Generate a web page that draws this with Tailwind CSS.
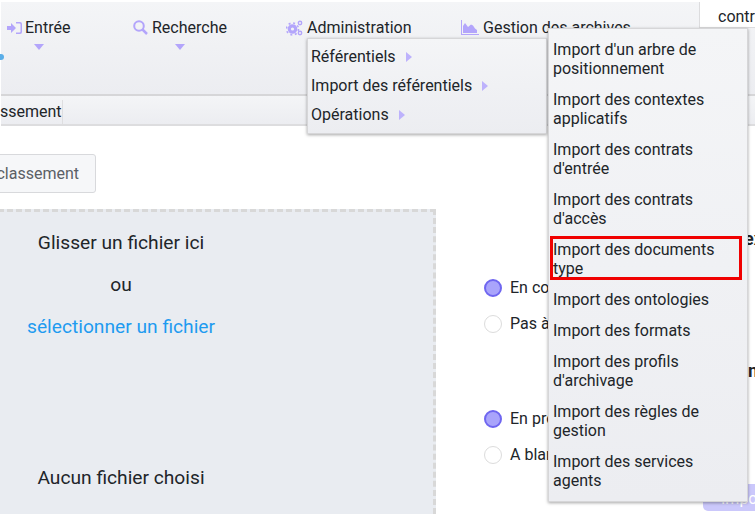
<!DOCTYPE html>
<html class="overflow-hidden">
<head>
<meta charset="UTF-8">
<title>Import</title>
<script src="https://cdn.jsdelivr.net/npm/@tailwindcss/browser@4"></script>
</head>
<body class="w-[755px] h-[514px] overflow-hidden bg-white text-[#212529] font-['Roboto',sans-serif] text-[16px] relative">
    <!-- top navigation -->
    <nav class="relative h-[94px] mt-[2px] ml-px bg-gradient-to-b from-[#f4f5f7] to-[#ecedf1] border-b-2 border-[#d6d6d8] flex items-start">
        <div class="absolute left-[-3px] top-[52px] size-[6px] rounded-full bg-[#5aaee8]"></div>
        <div class="w-[132px] pl-[6px] pt-[16px] relative">
            <div class="flex items-center gap-[3px] leading-[19px]">
                <svg width="15" height="14" viewBox="0 0 15 14" fill="#b3a5fb"><path d="M0 5h4V2l5 5-5 5V9H0z"/><path d="M9 1h4a2 2 0 0 1 2 2v8a2 2 0 0 1-2 2H9v-1.500h3.500a1 1 0 0 0 1-1v-7a1 1 0 0 0-1-1H9z"/></svg>
                <span>Entrée</span>
            </div>
            <div class="absolute left-[33px] top-[42px] w-0 h-0 border-x-[5px] border-x-transparent border-t-[6px] border-t-[#b3a5fb]"></div>
        </div>
        <div class="w-[153px] pt-[16px] relative">
            <div class="flex items-center gap-[4px] leading-[19px]">
                <svg width="15" height="15" viewBox="0 0 15 15" fill="none" stroke="#b3a5fb" stroke-width="2"><circle cx="6" cy="6" r="4.800"/><path d="M9.500 9.500l4.500 4.500" stroke-width="2.500"/></svg>
                <span>Recherche</span>
            </div>
            <div class="absolute left-[42px] top-[42px] w-0 h-0 border-x-[5px] border-x-transparent border-t-[6px] border-t-[#b3a5fb]"></div>
        </div>
        <div class="w-[175px] pt-[16px]">
            <div class="flex items-center gap-[4px] leading-[19px]">
                <svg width="17" height="16" viewBox="0 0 17 16" fill="#b3a5fb"><circle cx="6.500" cy="9" r="3.200" fill="none" stroke="#b3a5fb" stroke-width="3.200"/><circle cx="6.500" cy="9" r="6" fill="none" stroke="#b3a5fb" stroke-width="1.600" stroke-dasharray="2 2.700"/><circle cx="14" cy="3" r="1.700" fill="none" stroke="#b3a5fb" stroke-width="1.400"/><circle cx="14" cy="13" r="1.700" fill="none" stroke="#b3a5fb" stroke-width="1.400"/></svg>
                <span>Administration</span>
            </div>
        </div>
        <div class="pt-[16px]">
            <div class="flex items-center gap-[4px] leading-[19px]">
                <svg width="18" height="15" viewBox="0 0 18 15" fill="#b3a5fb"><path d="M0 0h1v14h17v1H0z"/><path d="M2 13V6l2-3 3 4 3-2.500 2 1 2 3 2 1.500v3z"/></svg>
                <span>Gestion des archives</span>
            </div>
        </div>
        <!-- tab on the right -->
        <div class="absolute left-[698px] top-0 w-[56px] h-[26px] bg-white border-l border-[#dcdcde] border-b pl-[18px] pt-[5px] leading-[19px] overflow-hidden">contr</div>
    </nav>

    <!-- sub bar -->
    <div class="h-[30px] bg-gradient-to-b from-[#f4f5f7] to-[#ecedf1] border-b-2 border-[#dddddf] flex items-center ml-px">
        <span class="mt-[3px] border-r border-[#dedee0] leading-[24px] -ml-[24px]">Classement</span>
    </div>

    <!-- page content -->
    <div class="flex items-start">
        <div class="w-[436px] shrink-0">
            <div class="-ml-[10px] mt-[28px] w-[106px] h-[39px] overflow-hidden bg-[#f6f7f9] border border-[#d8d9dc] rounded-[3px] text-[#5b6066] leading-[37px] pr-[16px] whitespace-nowrap flex justify-end">classement</div>
            <div class="mt-[16px] -ml-[20px] w-[456px] h-[305px] bg-[#e9ecf1] border-[3px] border-b-0 border-dashed border-[#d8d8d8] text-[19.2px] leading-[22px]">
                <div class="w-[278px] flex flex-col items-center ml-[-1px] pt-[20px]">
                    <p>Glisser un fichier ici</p>
                    <p class="mt-[20px]">ou</p>
                    <p class="mt-[20px] text-[#1e9bf0]">sélectionner un fichier</p>
                    <p class="mt-[129px]">Aucun fichier choisi</p>
                </div>
            </div>
        </div>
        <div class="ml-[48px] pt-[152px] text-[16px] leading-[19px] whitespace-nowrap">
            <div class="flex items-center gap-[8px] h-[19px]">
                <span class="size-[18px] rounded-full bg-[#a9a4fb] border-2 border-[#6f66f0]"></span>En cours
            </div>
            <div class="flex items-center gap-[8px] h-[19px] mt-[17px]">
                <span class="size-[18px] rounded-full bg-white border border-[#dcdcdc]"></span>Pas à pas
            </div>
            <div class="flex items-center gap-[8px] h-[19px] mt-[76px]">
                <span class="size-[18px] rounded-full bg-[#a9a4fb] border-2 border-[#6f66f0]"></span>En production
            </div>
            <div class="flex items-center gap-[8px] h-[19px] mt-[17px]">
                <span class="size-[18px] rounded-full bg-white border border-[#dcdcdc]"></span>A blanc
            </div>
        </div>
    </div>

    <!-- fragments of the right column, behind the menu -->
    <div class="absolute left-[640px] top-[228px] w-[123px] text-right font-bold text-[18px] leading-[22px] whitespace-nowrap">Contex</div>
    <div class="absolute left-[640px] top-[360px] w-[118px] text-right font-bold text-[18px] leading-[22px] whitespace-nowrap">Exécution</div>
    <div class="absolute left-[703px] top-[484px] w-[60px] h-[27px] rounded-[5px] bg-[#cbc8fb] text-white pl-[18px] pt-[5px] leading-[19px] overflow-hidden">Import</div>

    <!-- administration dropdown -->
    <div class="absolute left-[307px] top-[38px] w-[240px] h-[96px] z-10 bg-gradient-to-b from-[#f4f5f7] to-[#ecedf1] border border-[#d6d6d8] shadow-[0_1px_3px_rgba(0,0,0,0.35)] pl-[3px] pt-[8px] leading-[19px] text-[#212529]">
        <div class="flex items-center gap-[10px] h-[19px]">Référentiels <span class="w-0 h-0 border-y-[5px] border-y-transparent border-l-[6px] border-l-[#bdb2fc]"></span></div>
        <div class="flex items-center gap-[10px] h-[19px] mt-[10px]">Import des référentiels <span class="w-0 h-0 border-y-[5px] border-y-transparent border-l-[6px] border-l-[#bdb2fc]"></span></div>
        <div class="flex items-center gap-[10px] h-[19px] mt-[10px]">Opérations <span class="w-0 h-0 border-y-[5px] border-y-transparent border-l-[6px] border-l-[#bdb2fc]"></span></div>
    </div>

    <!-- import submenu -->
    <ul class="absolute left-[548px] top-[28px] w-[200px] h-[474px] z-20 bg-gradient-to-b from-[#f4f5f7] to-[#ecedf1] border border-[#d6d6d8] shadow-[0_1px_3px_rgba(0,0,0,0.35)] leading-[19px] text-[#212529] pt-[5px]">
        <li class="px-[4px] py-[6px] pr-[30px]">Import d'un arbre de positionnement</li>
        <li class="px-[4px] py-[6px] pr-[30px]">Import des contextes applicatifs</li>
        <li class="px-[4px] py-[6px] pr-[30px]">Import des contrats d'entrée</li>
        <li class="px-[4px] py-[6px] pr-[30px]">Import des contrats d'accès</li>
        <li class="px-[4px] py-[6px] pr-[20px] relative">Import des documents type
            <div class="absolute left-[1px] top-[2px] w-[192px] h-[44px] border-[3px] border-[#f00000]"></div>
        </li>
        <li class="px-[4px] py-[6px]">Import des ontologies</li>
        <li class="px-[4px] py-[6px]">Import des formats</li>
        <li class="px-[4px] py-[6px] pr-[30px]">Import des profils d'archivage</li>
        <li class="px-[4px] py-[6px] pr-[30px]">Import des règles de gestion</li>
        <li class="px-[4px] py-[6px] pr-[30px]">Import des services agents</li>
    </ul>
</body>
</html>
